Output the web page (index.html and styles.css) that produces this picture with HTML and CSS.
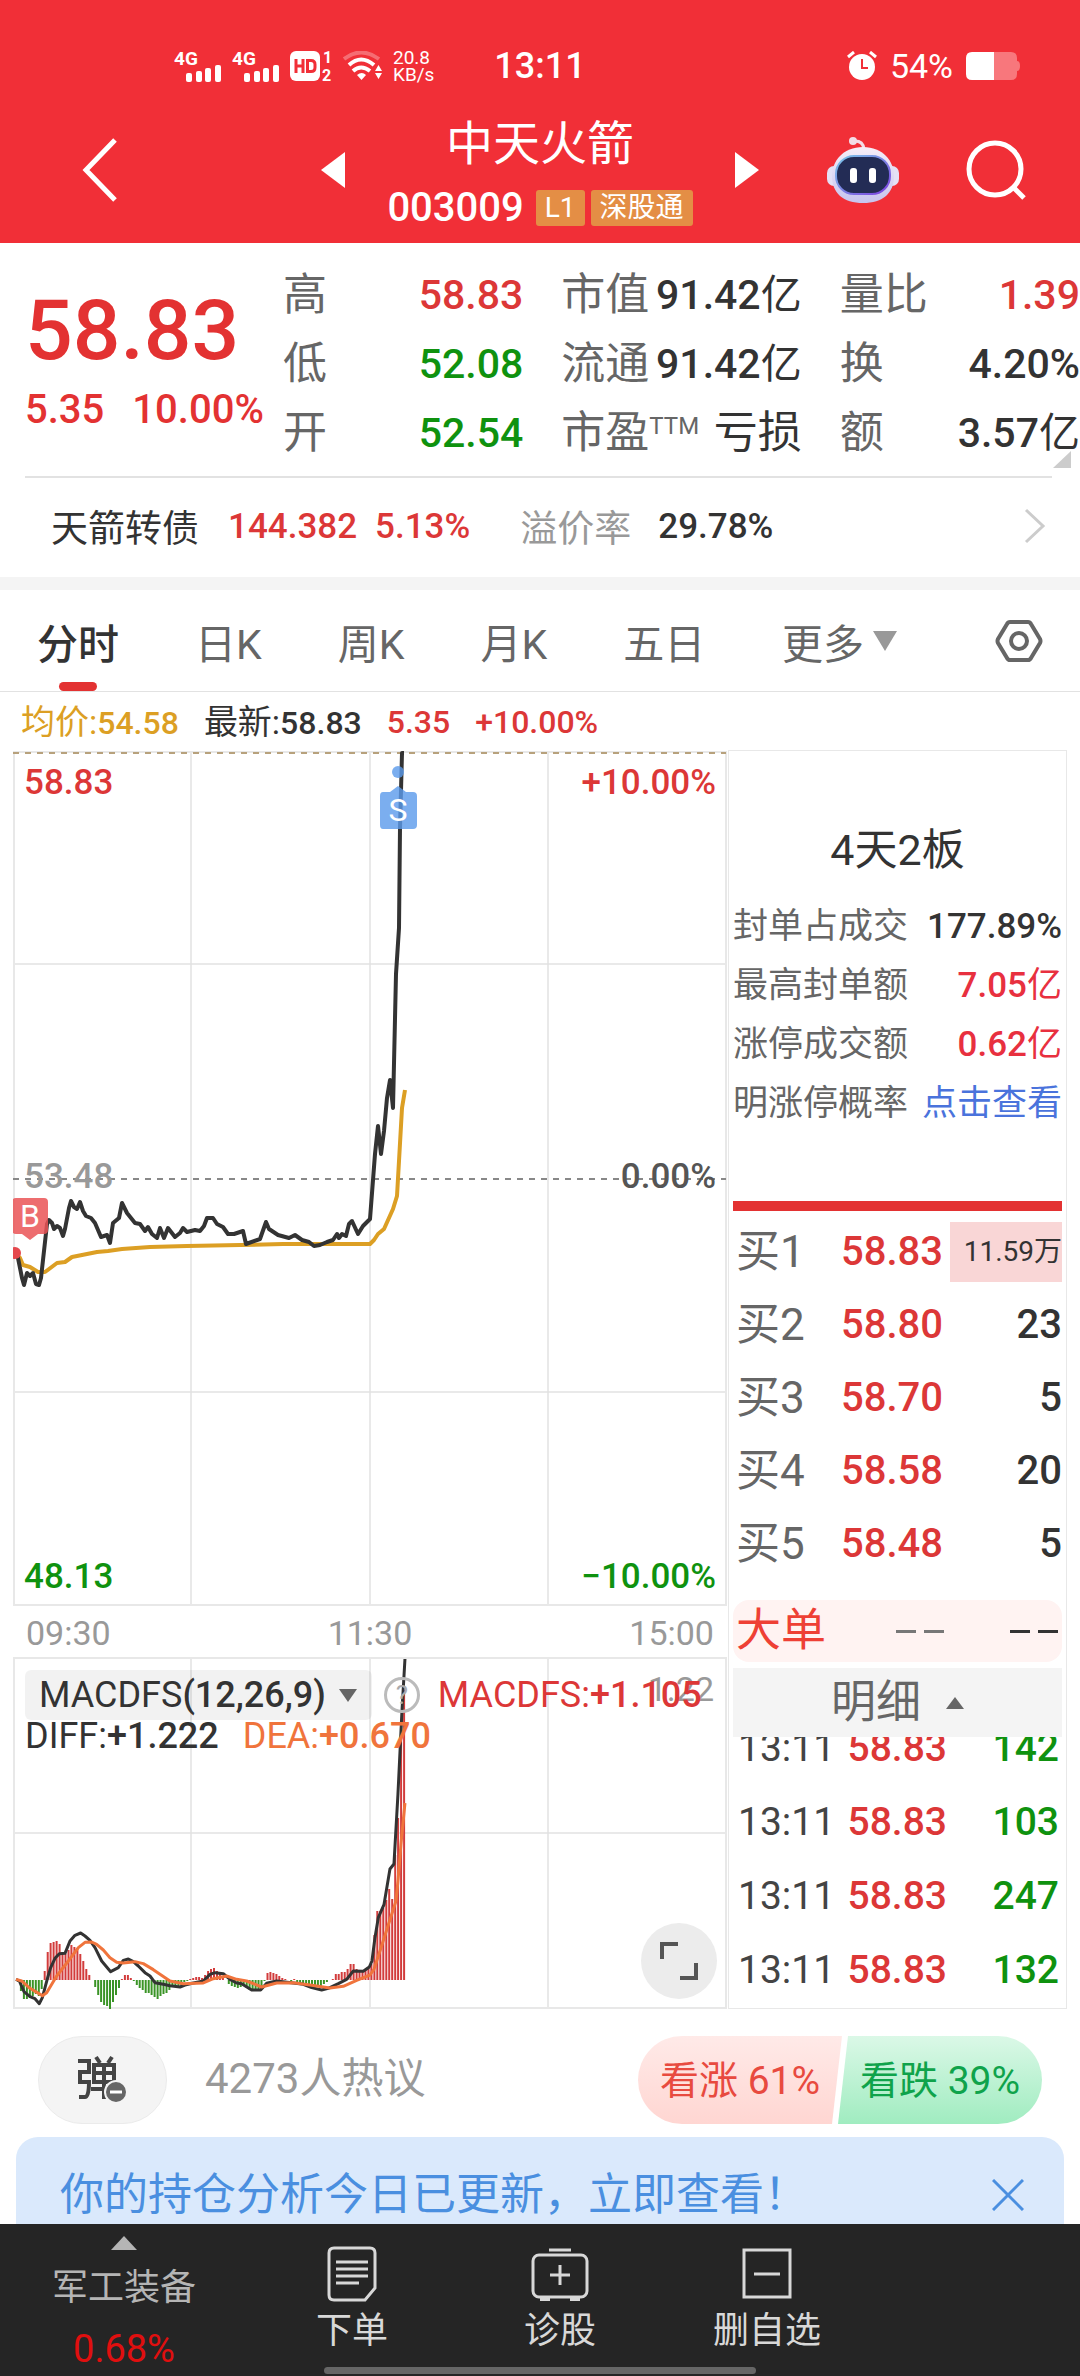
FILE: index.html
```html
<!DOCTYPE html>
<html lang="zh-CN">
<head>
<meta charset="utf-8">
<meta name="viewport" content="width=device-width, initial-scale=1">
<title>中天火箭 003009</title>
<link rel="stylesheet" href="styles.css">
</head>
<body>
<header class="header">
  <div class="status">
    <div class="status-left">
      <svg class="signal" width="48" height="34" viewBox="0 0 48 34" fill="#fff"><text x="0" y="16" class="signal-text">4G</text><rect x="12" y="24" width="6" height="9" rx="2"/><rect x="22" y="22" width="6" height="11" rx="2"/><rect x="31" y="19" width="6" height="14" rx="2"/><rect x="41" y="16" width="6" height="17" rx="2"/></svg>
      <svg class="signal" width="48" height="34" viewBox="0 0 48 34" fill="#fff"><text x="0" y="16" class="signal-text">4G</text><rect x="12" y="24" width="6" height="9" rx="2"/><rect x="22" y="22" width="6" height="11" rx="2"/><rect x="31" y="19" width="6" height="14" rx="2"/><rect x="41" y="16" width="6" height="17" rx="2"/></svg>
      <svg class="signal" width="43" height="32" viewBox="0 0 43 32" fill="#fff"><rect x="0" y="1" width="30" height="30" rx="6"/><path d="M6 9v14M13 9v14M6 16h7M17.500 10.500v11h3.500q4 0 4-4v-3q0-4-4-4z" fill="none" stroke="#f12f37" stroke-width="3"/><text x="33" y="13" class="sim-text">1</text><text x="32" y="31" class="sim-text">2</text></svg>
      <svg width="40" height="30" viewBox="0 0 40 30" fill="none" stroke="#fff" stroke-width="4"><path d="M1 8Q18-5 36 8" opacity=".3"/><path d="M6 14Q18 3 31 14"/><path d="M10 20Q18 13 27 20"/><path d="M14 24q5-4 9 0l-4.500 5z" fill="#fff" stroke="none"/><path d="M32 20l3.500-6 3.500 6zM32 22h7l-3.500 6z" fill="#fff" stroke="none"/></svg>
      <span class="speed">20.8<br>KB/s</span>
    </div>
    <time class="clock">13:11</time>
    <div class="status-right">
      <svg width="30" height="30" viewBox="0 0 30 30"><circle cx="15" cy="16" r="13" fill="#fff"/><path d="M1 6l6-5M23 1l6 5" stroke="#fff" stroke-width="3"/><path d="M15 8v9h6" fill="none" stroke="#f12f37" stroke-width="2"/></svg>
      <span class="battery-text">54%</span>
      <svg width="54" height="28" viewBox="0 0 54 28"><path d="M28 0h17q6 0 6 6v3q3 0 3 5t-3 5v3q0 6-6 6H28z" fill="#f8777c"/><path d="M28 0H6Q0 0 0 6v16q0 6 6 6h22z" fill="#fff"/></svg>
    </div>
  </div>
  <div class="titlebar">
    <div class="title-left">
      <button class="icon-btn" aria-label="返回"><svg width="36" height="64" viewBox="0 0 36 64" fill="none" stroke="#fff" stroke-width="5"><path d="M33 2L4 32l29 30"/></svg></button>
      <button class="icon-btn" aria-label="上一只"><svg width="24" height="36" viewBox="0 0 24 36" fill="#fff"><path d="M24 0v36L0 18z"/></svg></button>
    </div>
    <div class="title">
      <h1 class="name">中天火箭</h1>
      <div class="code">003009<span class="tag first">L1</span><span class="tag">深股通</span></div>
    </div>
    <div class="title-right">
      <button class="icon-btn" aria-label="下一只"><svg width="24" height="36" viewBox="0 0 24 36" fill="#fff"><path d="M0 0v36l24-18z"/></svg></button>
      <button class="icon-btn" aria-label="智能助手"><svg width="72" height="67" viewBox="0 0 72 67"><defs><linearGradient id="shell" x2="0" y2="1"><stop offset="0" stop-color="#f7eef8"/><stop offset="1" stop-color="#c6c4ee"/></linearGradient><linearGradient id="rim" x2="1" y2="1"><stop offset="0" stop-color="#7cc8e8"/><stop offset="1" stop-color="#7b3fe0"/></linearGradient></defs><path d="M26 4q10-1 11 8" fill="none" stroke="#f3dce6" stroke-width="3"/><circle cx="26" cy="4" r="4" fill="#f3dce6"/><rect x="0" y="29" width="72" height="20" rx="7" fill="#e4e0f5"/><path d="M36 10C56 10 67 24 67 39C67 56 56 66 36 66S5 56 5 39C5 24 16 10 36 10z" fill="url(#shell)"/><rect x="9" y="19" width="54" height="38" rx="18" fill="#232c55" stroke="url(#rim)" stroke-width="2"/><rect x="23" y="31" width="7" height="15" rx="3" fill="#fff"/><rect x="42" y="31" width="7" height="15" rx="3" fill="#fff"/></svg></button>
      <button class="icon-btn" aria-label="搜索"><svg width="60" height="60" viewBox="0 0 60 60" fill="none" stroke="#fff" stroke-width="5"><circle cx="29" cy="29" r="26"/><path d="M47 47l11 11"/></svg></button>
    </div>
  </div>
</header>

<main class="main">
  <section class="quote">
    <div class="price">
      <div class="last">58.83</div>
      <div class="change"><span>5.35</span><span>10.00%</span></div>
    </div>
    <dl class="stats">
      <div><dt>高</dt><dd class="up">58.83</dd></div>
      <div><dt>市值</dt><dd>91.42<i>亿</i></dd></div>
      <div><dt>量比</dt><dd class="up">1.39</dd></div>
      <div><dt>低</dt><dd class="down">52.08</dd></div>
      <div><dt>流通</dt><dd>91.42<i>亿</i></dd></div>
      <div><dt>换</dt><dd>4.20%</dd></div>
      <div><dt>开</dt><dd class="down">52.54</dd></div>
      <div><dt>市盈<sup>TTM</sup></dt><dd class="word">亏损</dd></div>
      <div><dt>额</dt><dd>3.57<i>亿</i></dd></div>
    </dl>
    <svg class="corner" width="18" height="17" viewBox="0 0 18 17" fill="#ccc"><path d="M18 0v17H0z"/></svg>
  </section>

  <a class="bond" href="#bond">
    <span>天箭转债</span><span class="num up bond-price">144.382</span><span class="num up bond-pct">5.13%</span><span class="muted">溢价率</span><span class="num bond-premium">29.78%</span>
    <svg class="bond-arrow" width="22" height="36" viewBox="0 0 22 36" fill="none" stroke="#ccc" stroke-width="3"><path d="M2 2l17 16L2 34"/></svg>
  </a>

  <nav class="tabs">
    <button class="tab active">分时</button>
    <button class="tab">日K</button>
    <button class="tab">周K</button>
    <button class="tab">月K</button>
    <button class="tab">五日</button>
    <button class="tab more">更多<svg width="24" height="20" viewBox="0 0 24 20" fill="#999"><path d="M0 0h24L12 20z"/></svg></button>
    <button class="tab gear" aria-label="设置"><svg width="48" height="44" viewBox="0 0 48 44" fill="none" stroke="#666" stroke-width="4"><path d="M15 3h18q2 0 3 2l9 15q1 2 0 4l-9 15q-1 2-3 2H15q-2 0-3-2L3 24q-1-2 0-4l9-15q1-2 3-2z"/><circle cx="24" cy="22" r="8"/></svg></button>
  </nav>

  <div class="legend">
    <span class="avg">均价:<b>54.58</b></span><span>最新:<b>58.83</b></span><b class="up">5.35</b><b class="up">+10.00%</b>
  </div>

  <section class="board">
    <div class="charts">
      <div class="stack">
        <svg class="chart" viewBox="13 750 714 855">
          <path d="M191 751V1604M370 751V1604M548 751V1604M13 963H726M13 1391H726" stroke="#e2e2e2" stroke-width="1.500"/>
          <rect x="14" y="751" width="712" height="853" fill="none" stroke="#e8e8e8" stroke-width="2"/>
          <path d="M13 752H726" stroke="#b7a17c" stroke-width="2" stroke-dasharray="6 6"/>
          <path d="M13 1178H726" stroke="#888" stroke-width="2" stroke-dasharray="6 6"/>
          <path class="line" stroke="#dc9f24" d="M15 1252L20 1257L23 1264L30 1266L38 1271L45 1271L57 1262L65 1261L72 1256L97 1251L108 1250L122 1248L150 1246L187 1245L240 1244L283 1243L370 1243L374 1239L378 1233L384 1228L393 1208L397 1195L399 1160L402 1107L405 1089"/>
          <path class="line" stroke="#333" d="M15 1252L18 1257L22 1277L24 1284L27 1272L30 1275L33 1272L36 1283L39 1284L41 1277L47 1223L49 1219L52 1222L54 1228L57 1225L60 1227L63 1235L65 1228L69 1207L71 1200L74 1206L77 1208L80 1201L83 1210L86 1215L91 1217L95 1222L101 1236L107 1234L110 1242L113 1222L119 1217L122 1202L127 1212L135 1222L140 1223L145 1230L148 1226L152 1233L157 1237L160 1227L164 1237L168 1227L175 1236L180 1232L183 1227L187 1231L195 1229L200 1230L204 1225L207 1217L213 1217L217 1223L223 1226L228 1233L234 1233L243 1230L246 1243L260 1238L266 1221L269 1228L278 1234L289 1237L295 1234L302 1239L309 1241L314 1245L320 1244L327 1241L333 1239L337 1233L339 1237L342 1233L346 1235L349 1223L352 1220L358 1233L363 1225L369 1219L370 1218L375 1153L378 1125L381 1153L384 1130L387 1097L390 1079L393 1107L396 973L399 927L400 827L402 752H404"/>
          <g fill="#5b9bec" opacity=".8"><circle cx="398" cy="771" r="6"/><path d="M383 791h7l8-6 8 6h7q4 0 4 4v29q0 4-4 4h-30q-3 0-3-4v-29q0-4 3-4z"/></g>
          <text x="398" y="820" class="marker">S</text>
          <circle cx="15" cy="1252" r="6" fill="#e5484d"/>
          <path d="M16 1197h28q4 0 4 4v28q0 4-4 4h-6l-8 6-8-6h-6q-4 0-4-4v-28q0-4 4-4z" fill="#ea5456" opacity=".85"/>
          <text x="30" y="1226" class="marker">B</text>
        </svg>
        <div class="scale">
          <div class="up"><span>58.83</span><span>+10.00%</span></div>
          <div class="mid"><span class="muted">53.48</span><span>0.00%</span></div>
          <div class="down"><span>48.13</span><span>−10.00%</span></div>
        </div>
      </div>
      <div class="axis"><span>09:30</span><span>11:30</span><span>15:00</span></div>
      <div class="stack">
        <svg class="chart" viewBox="13 1656 714 352">
          <path d="M191 1657V2007M370 1657V2007M548 1657V2007M13 1832H726" stroke="#e2e2e2" stroke-width="1.500"/>
          <rect x="14" y="1657" width="712" height="350" fill="none" stroke="#e8e8e8" stroke-width="2"/>
          <path id="bars-up" stroke="#d23c3c" stroke-width="2"/>
          <path id="bars-down" stroke="#3a9426" stroke-width="2"/>
          <g transform="translate(10 1900) scale(.3333)">
            <path class="line wave" stroke="#333" d="M18 235L28 240L42 272L60 287L75 293L88 308L97 290L105 260L113 230L122 200L135 172L148 158L165 157L180 120L195 103L212 96L225 105L240 118L255 140L275 180L302 212L325 200L340 178L355 174L370 182L385 195L405 215L420 225L435 245L460 250L480 254L510 258L525 252L550 246L580 240L600 220L615 215L640 218L660 235L680 246L695 248L725 267L752 267L770 247L800 240L850 246L880 250L905 260L935 267L955 262L985 248L1010 235L1030 210L1060 211L1078 198L1086 180L1095 110L1105 50L1122 11L1140 -96L1152 -111L1164 -321L1176 -570L1185 -726"/>
            <path class="line wave" stroke="#f0743c" d="M18 235L35 240L60 262L97 284L110 275L140 225L175 180L205 140L225 124L245 123L260 130L280 147L300 170L320 184L340 186L375 182L400 188L430 206L480 240L520 248L580 246L610 233L650 225L680 235L710 240L755 258L800 246L850 245L900 252L960 261L1000 256L1040 238L1080 222L1092 205L1110 150L1158 0L1164 -60L1173 -171L1185 -294"/>
          </g>
        </svg>
        <div class="macd">
          <div class="macd-row">
            <button class="macd-btn">MACDFS<b>(12,26,9)</b><svg width="18" height="13" viewBox="0 0 18 13" fill="#666"><path d="M0 0h18L9 13z"/></svg></button>
            <button class="help" aria-label="说明">?</button>
            <span class="up">MACDFS:<b>+1.105</b></span>
          </div>
          <div class="macd-row second"><span>DIFF:<b>+1.222</b></span><span class="dea">DEA:<b>+0.670</b></span></div>
          <span class="peak">1.22</span>
          <button class="expand" aria-label="全屏"><svg width="40" height="40" viewBox="0 0 40 40" fill="none" stroke="#555" stroke-width="4"><path d="M3 18V3h16M37 22v15H21"/></svg></button>
        </div>
      </div>
    </div>

    <aside class="panel">
      <h2 class="panel-title">4天2板</h2>
      <dl class="facts">
        <div><dt>封单占成交</dt><dd>177.89%</dd></div>
        <div><dt>最高封单额</dt><dd class="hot">7.05<i>亿</i></dd></div>
        <div><dt>涨停成交额</dt><dd class="hot">0.62<i>亿</i></dd></div>
        <div><dt>明涨停概率</dt><dd><a href="#rate">点击查看</a></dd></div>
      </dl>
      <div class="ratio"></div>
      <table class="book">
        <tr><th>买1</th><td class="up">58.83</td><td><span class="flash">11.59万</span></td></tr>
        <tr><th>买2</th><td class="up">58.80</td><td>23</td></tr>
        <tr><th>买3</th><td class="up">58.70</td><td>5</td></tr>
        <tr><th>买4</th><td class="up">58.58</td><td>20</td></tr>
        <tr><th>买5</th><td class="up">58.48</td><td>5</td></tr>
      </table>
      <div class="big"><span>大单</span><span class="dash gray"><i></i><i></i></span><span class="dash"><i></i><i></i></span></div>
      <button class="detail">明细<svg width="18" height="12" viewBox="0 0 18 12" fill="#666"><path d="M9 0l9 12H0z"/></svg></button>
      <div class="ticks">
        <table>
          <tr><th>13:11</th><td class="up">58.83</td><td class="down">142</td></tr>
          <tr><th>13:11</th><td class="up">58.83</td><td class="down">103</td></tr>
          <tr><th>13:11</th><td class="up">58.83</td><td class="down">247</td></tr>
          <tr><th>13:11</th><td class="up">58.83</td><td class="down">132</td></tr>
        </table>
      </div>
    </aside>
  </section>

  <section class="talk">
    <button class="bullet" aria-label="弹幕"><svg width="54" height="50" viewBox="0 0 54 50"><path d="M2 6h11v11H4v10h9q0 15-4 15H3M20 2l4 6M36 2l-4 6M18 10h20v17H18zM18 18h20M28 10v34M15 34h26" fill="none" stroke="#444" stroke-width="4"/><circle cx="40" cy="37" r="12" fill="#f4f4f4"/><circle cx="40" cy="37" r="10" fill="#666"/><path d="M34 37h12" stroke="#fff" stroke-width="3"/></svg></button>
    <span class="hot-count">4273人热议</span>
    <div class="votes"><button class="vote bull">看涨 61%</button><button class="vote bear">看跌 39%</button></div>
  </section>

  <div class="notice-wrap">
    <div class="notice"><a href="#analysis">你的持仓分析今日已更新，立即查看！</a>
      <button class="icon-btn" aria-label="关闭"><svg width="32" height="32" viewBox="0 0 32 32" stroke="#4a8fe0" stroke-width="3"><path d="M1 1l30 30M31 1L1 31"/></svg></button>
    </div>
  </div>
</main>

<nav class="dock">
  <a class="dock-item sector" href="#sector"><svg width="26" height="14" viewBox="0 0 26 14" fill="#b5b5b5"><path d="M13 0l13 14H0z"/></svg><span>军工装备</span><span class="sector-pct">0.68%</span></a>
  <a class="dock-item" href="#order"><svg width="50" height="56" viewBox="0 0 50 56" fill="none" stroke="#d8d8d8" stroke-width="3"><path d="M7 2h36q5 0 5 5v35L38 54H7q-5 0-5-5V7q0-5 5-5z"/><path d="M9 16h32M9 23h32M9 30h32M9 37h23"/></svg><span>下单</span></a>
  <a class="dock-item" href="#diagnose"><svg width="58" height="56" viewBox="0 0 58 56" fill="none" stroke="#d8d8d8" stroke-width="3"><rect x="2" y="9" width="54" height="42" rx="6"/><path d="M18 4h22M29 19v20M19 29h20"/><path d="M9 53h10M39 53h10" stroke-width="4"/></svg><span>诊股</span></a>
  <a class="dock-item" href="#remove"><svg width="50" height="56" viewBox="0 0 50 56" fill="none" stroke="#d8d8d8" stroke-width="3"><rect x="2" y="4" width="46" height="47"/><path d="M12 28h26"/></svg><span>删自选</span></a>
  <div class="home-bar"></div>
</nav>
<script src="bars.js"></script>
</body>
</html>
```
FILE: styles.css
```css
* { box-sizing: border-box; }
body {
  margin: 0;
  min-height: 100vh;
  display: flex;
  flex-direction: column;
  background: #fff;
  color: #333;
  font-family: Roboto, "Noto Sans CJK SC", sans-serif;
  font-size: 36px;
}
button {
  margin: 0; padding: 0; border: 0; background: none;
  font: inherit; color: inherit;
}
a { color: inherit; text-decoration: none; }
h1, h2, dl, dd { margin: 0; font-weight: 400; }
table { border-collapse: collapse; width: 100%; table-layout: fixed; }
th, td { padding: 0; font-weight: 500; text-align: right; }
th { font-weight: 400; text-align: left; }
b { font-weight: 500; }
i { font-style: normal; font-weight: 400; }
svg { display: block; flex: none; }
.up { color: #dc3737; }
.down { color: #0f920f; }
.muted { color: #999; }
.num { font-weight: 500; }
.icon-btn { display: block; }

.header { background: #f12f37; color: #fff; }
.status {
  display: grid;
  grid-template-columns: minmax(0, 1fr) auto minmax(0, 1fr);
  align-items: center;
  height: 115px;
  padding-top: 17px;
}
.status-left { display: flex; align-items: center; gap: 10px; padding-left: 174px; }
.status-right { display: flex; align-items: center; justify-content: flex-end; gap: 13px; padding-right: 60px; }
.signal { overflow: visible; }
.signal-text { font-size: 19px; font-weight: 700; }
.sim-text { font-size: 16px; font-weight: 700; }
.speed { font-size: 19px; line-height: 17px; }
.clock { font-size: 36px; font-weight: 500; line-height: 48px; }
.battery-text { font-size: 34px; line-height: 40px; }

.titlebar { display: grid; grid-template-columns: 1fr 390px 1fr; align-items: center; }
.title-left, .title-right { display: flex; align-items: center; justify-content: space-between; padding-bottom: 18px; }
.title-left { padding-left: 82px; }
.title-right { padding-right: 54px; }
.title { text-align: center; }
.name { font-size: 47px; line-height: 58px; }
.code {
  display: flex; justify-content: center; align-items: center; gap: 6px;
  font-size: 40px; font-weight: 500; line-height: 70px;
}
.tag {
  padding: 0 9px;
  border-radius: 3px;
  background: #e48e45;
  font-size: 28px; font-weight: 400; line-height: 36px;
}
.tag.first { margin-left: 6px; }

.main { flex: 1; display: flex; flex-direction: column; }
.quote { position: relative; display: flex; padding: 18px 0 9px 25px; }
.price { flex: 0 0 258px; padding-top: 20px; color: #e33232; }
.last { font-size: 84px; font-weight: 500; line-height: 100px; }
.change { display: flex; gap: 28px; font-size: 40px; font-weight: 500; line-height: 58px; }
.stats { flex: 1; display: grid; grid-template-columns: repeat(3, 1fr); column-gap: 38px; }
.stats div { display: flex; justify-content: space-between; line-height: 69px; font-size: 41px; }
.stats dt { color: #666; font-size: 44px; white-space: nowrap; }
.stats dd { font-weight: 500; white-space: nowrap; }
.stats .word { font-size: 44px; font-weight: 400; }
.stats sup { font-size: 24px; line-height: 24px; vertical-align: 14px; }
.corner { position: absolute; right: 9px; bottom: 9px; }

.bond {
  display: flex; align-items: center;
  height: 98px; margin: -1px 28px 3px 25px; padding: 0 6px 0 26px;
  border-top: 2px solid #e2e2e2;
  font-size: 37px;
}
.bond .num { font-size: 35px; }
.bond-price { margin-left: 29px; }
.bond-pct { margin: 0 50px 0 18px; }
.bond-premium { margin-left: 27px; }
.bond-arrow { margin-left: auto; }

.tabs {
  display: flex; align-items: center; gap: 76px;
  height: 115px; padding: 0 37px;
  border-top: 13px solid #f4f4f4;
  border-bottom: 1px solid #e2e2e2;
}
.tab { display: flex; align-items: center; gap: 9px; height: 100%; font-size: 41px; color: #666; }
.active { position: relative; color: #333; font-weight: 500; }
.active::after {
  content: ""; position: absolute; left: 50%; bottom: 0;
  width: 38px; height: 9px; margin-left: -19px; border-radius: 5px; background: #e33232;
}
.more { margin-left: auto; }
.gear { margin-left: 22px; }

.legend { display: flex; gap: 25px; padding: 3px 21px 0; font-size: 34px; line-height: 55px; }
.legend b { font-size: 32px; }
.avg { color: #dc9f24; }

.board { display: grid; grid-template-columns: 714fr 339fr; column-gap: 1px; margin: 0 13px; }
.stack { display: grid; }
.stack > * { grid-area: 1 / 1; min-width: 0; }
.chart { width: 100%; height: auto; }
.line { fill: none; stroke-width: 4; stroke-linejoin: round; }
.wave { stroke-width: 9; }
.marker { fill: #fff; font-size: 32px; text-anchor: middle; }
.scale {
  display: flex; flex-direction: column; justify-content: space-between;
  padding: 12px 11px 9px; font-size: 35px; font-weight: 500; line-height: 40px;
}
.scale div, .axis { display: flex; justify-content: space-between; }
.mid { padding-bottom: 6px; color: #555; }
.axis { padding: 0 13px; font-size: 34px; line-height: 54px; height: 51px; color: #999; }
.macd { position: relative; padding: 13px 12px 12px; }
.macd-row { display: flex; align-items: center; }
.macd-btn {
  display: flex; align-items: center; padding: 0 15px 0 14px; margin-right: 12px;
  border-radius: 6px; background: rgba(0, 0, 0, .05); line-height: 50px;
}
.macd-btn svg { margin-left: 13px; }
.help {
  width: 36px; height: 36px; margin-right: 18px; border: 3px solid #bbb; border-radius: 50%;
  color: #aaa; font-size: 26px; line-height: 30px;
}
.second { gap: 24px; line-height: 32px; }
.dea { color: #f0743c; }
.peak { position: absolute; right: 13px; top: 12px; line-height: 40px; color: #999; font-size: 34px; z-index: -1; }
.expand {
  position: absolute; right: 10px; bottom: 10px; width: 76px; height: 76px;
  display: grid; place-items: center; border-radius: 50%; background: #ececec;
}

.panel { border: 1px solid #e8e8e8; padding: 69px 4px 0; margin-top: -1px; }
.panel-title { font-size: 43px; line-height: 60px; text-align: center; margin-bottom: 17px; }
.facts div { display: flex; justify-content: space-between; font-size: 35px; line-height: 59px; white-space: nowrap; }
.facts dt { color: #666; }
.facts dd { font-weight: 500; }
.facts .hot { color: #e8303f; }
.facts a { color: #4a73dc; font-weight: 400; }
.ratio { height: 10px; margin: 68px 0 4px; background: #e33232; }
.book td, .book th { height: 73px; line-height: 60px; font-size: 40px; }
.book th { padding-left: 3px; width: 80px; font-size: 44px; color: #666; }
.book td:nth-child(2) { width: 130px; }
.book .flash { display: block; margin-left: 7px; background: #f9d6d6; font-size: 28px; font-weight: 400; line-height: 60px; }
.big {
  display: grid; grid-template-columns: 110px 98px 1fr; align-items: center;
  height: 62px; margin: 20px 0 6px; padding: 0 4px 0 3px;
  border-radius: 16px; background: #fff3f2; color: #ee4035; font-size: 45px; line-height: 62px;
}
.dash { display: flex; justify-content: flex-end; gap: 8px; color: #333; }
.dash i { width: 20px; height: 3px; background: currentColor; }
.dash.gray { color: #777; }
.detail {
  display: flex; align-items: center; justify-content: center; gap: 25px;
  width: 100%; height: 69px; background: #f4f4f4; color: #666; font-size: 45px; line-height: 72px;
}
.ticks { display: flex; align-items: flex-end; height: 271px; overflow: hidden; padding: 0 3px 1px 5px; }
.ticks td, .ticks th { height: 74px; line-height: 74px; font-size: 39px; }
.ticks th { width: 101px; color: #444; }
.ticks td:nth-child(2) { width: 108px; }

.talk { display: flex; align-items: center; padding: 27px 38px 13px; }
.bullet {
  display: grid; place-items: center; width: 129px; height: 88px;
  border: 1px solid #ebebeb; border-radius: 44px; background: #f4f4f4;
}
.hot-count { margin-left: 38px; color: #999; font-size: 42px; line-height: 86px; padding-bottom: 2px; }
.votes { display: flex; margin-left: auto; border-radius: 44px; overflow: hidden; }
.vote { width: 204px; height: 88px; padding-bottom: 6px; font-size: 39px; }
.bull { background: linear-gradient(#ffeae8, #ffd6d2); color: #e84a3f; clip-path: polygon(0 0, 100% 0, calc(100% - 10px) 100%, 0 100%); }
.bear { margin-left: -4px; background: linear-gradient(#dbf8e7, #a0ecc0); color: #0fa34b; clip-path: polygon(10px 0, 100% 0, 100% 100%, 0 100%); }

.notice-wrap { flex: 1 0 87px; height: 87px; overflow: hidden; padding: 0 16px; }
.notice {
  display: flex; align-items: center; justify-content: space-between;
  padding: 0 40px 0 44px; border-radius: 22px;
  background: #dae9fc; color: #4a8fe0; font-size: 44px; line-height: 116px;
}

.dock {
  position: relative; display: grid; grid-template-columns: 248fr 208fr 208fr 206fr 210fr;
  height: 153px; background: #252525; color: #d8d8d8;
}
.dock-item { display: flex; flex-direction: column; align-items: center; padding-top: 22px; font-size: 36px; line-height: 58px; }
.sector { padding-top: 12px; color: #b5b5b5; line-height: 76px; }
.sector-pct { color: #e00f0f; font-size: 38px; line-height: 46px; }
.home-bar { position: absolute; left: 30%; right: 30%; bottom: 3px; height: 7px; border-radius: 4px; background: #666; }
```
FILE: bars.js
```js
// One value per trading minute: height above (+) or below (-) the zero line.
const values = [0,-2,-11,-19,-19,-18,-16,-14,-16,-9,9,28,37,38,39,36,28,26,30,35,33,31,26,19,11,5,0,-7,-15,-22,-25,-26,-29,-22,-15,-8,1,5,5,2,-1,-5,-8,-10,-13,-13,-15,-17,-19,-16,-14,-13,-10,-6,-6,-6,-5,-2,-1,1,2,3,3,2,5,9,11,12,9,8,4,0,-4,-6,-7,-8,-7,-6,-8,-10,-10,-9,-9,-6,-1,7,8,7,6,4,2,1,0,-1,1,-2,-3,-4,-6,-6,-7,-7,-7,-6,-4,-2,0,1,6,6,8,8,11,16,16,11,9,10,11,13,16,45,69,69,72,80,91,81,125,162,259,290];
const zero = 1979, start = 15, step = 2.97;
const draw = (id, keep) => {
  const d = values.map((v, i) => keep(v) ? `M${(start + i * step).toFixed(1)} ${zero}v${-v}` : "").join("");
  document.getElementById(id).setAttribute("d", d);
};
draw("bars-up", v => v > 0);
draw("bars-down", v => v < 0);
```
